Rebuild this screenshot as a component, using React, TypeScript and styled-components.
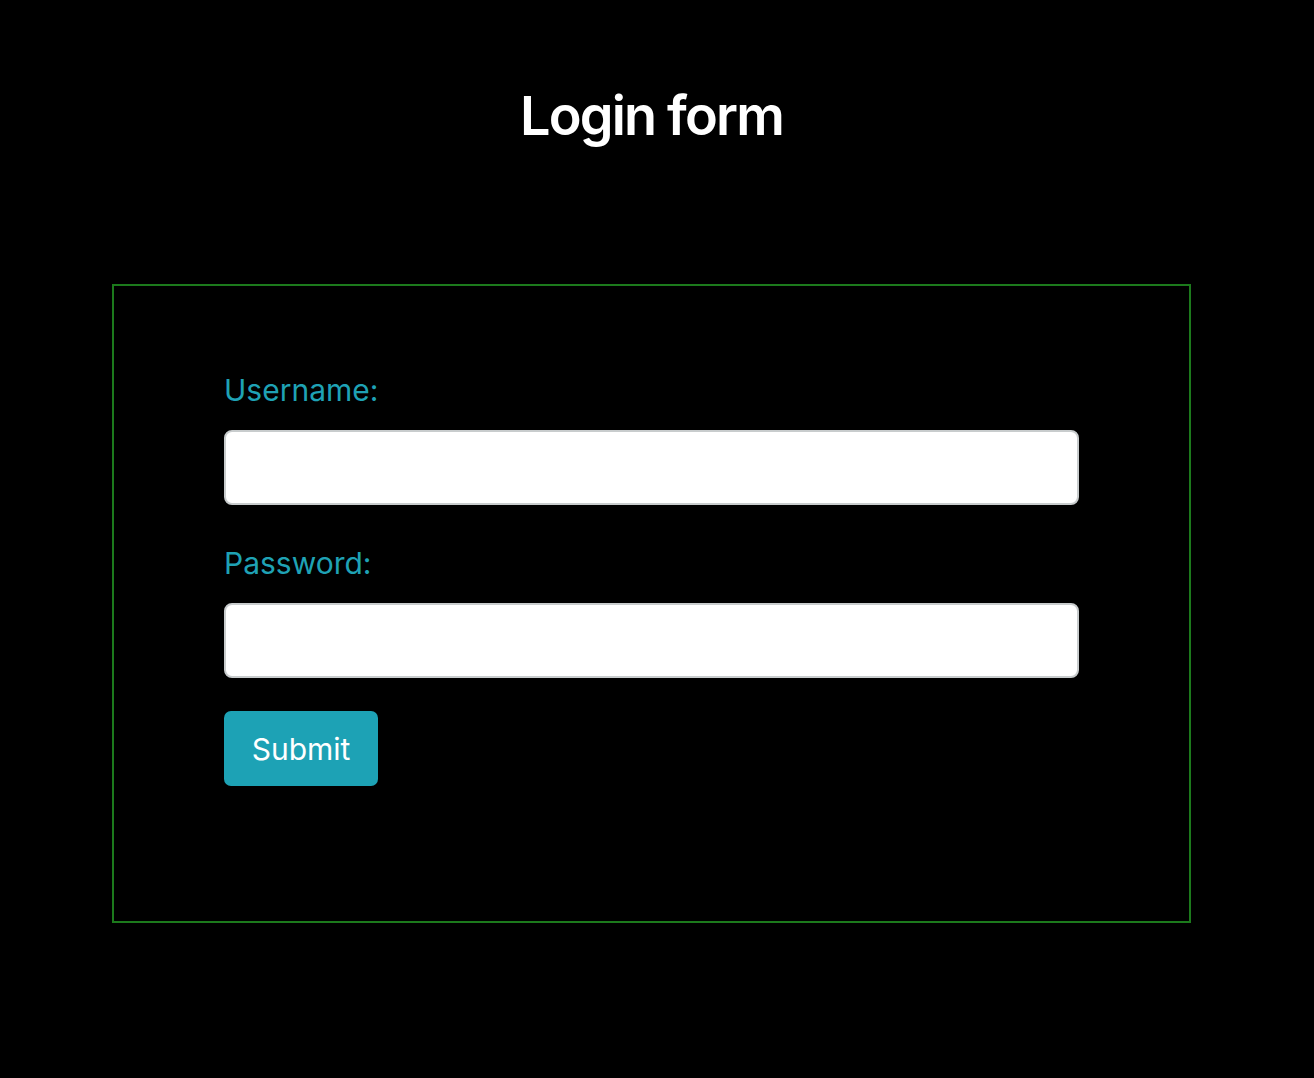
import React from 'react'
import styled, { createGlobalStyle } from 'styled-components'

const GlobalStyle = createGlobalStyle`
  html, body {
    margin: 0;
    padding: 0;
    background: #000;
  }
  body {
    font-family: Inter, "Noto Sans", sans-serif;
    color: #fff;
  }
`

const App = () => {
  return (
    <Page>
      <GlobalStyle />
      <Title>Login form</Title>
      <FormBox onSubmit={e => e.preventDefault()}>
        <Field>
          <Label htmlFor="username">Username:</Label>
          <Input id="username" type="text" />
        </Field>
        <Field>
          <Label htmlFor="password">Password:</Label>
          <Input id="password" type="password" />
        </Field>
        <Button type="submit">Submit</Button>
      </FormBox>
    </Page>
  )
}

export default App

const Page = styled.div`
  width: 1303px;
  min-height: 1078px;
  padding-top: 82px;
  box-sizing: border-box;
  display: flex;
  flex-direction: column;
  align-items: center;
`

const Title = styled.h1`
  margin: 0;
  font-size: 54px;
  font-weight: 600;
  line-height: 68px;
  letter-spacing: -1.8px;
`

const FormBox = styled.form`
  margin-top: 134px;
  width: 1079px;
  height: 639px;
  box-sizing: border-box;
  border: 2px solid #1c7a1c;
  padding: 84px 110px 0;
  display: flex;
  flex-direction: column;
  gap: 38px;
`

const Field = styled.div`
  display: flex;
  flex-direction: column;
`

const Label = styled.label`
  color: #1fa2b5;
  font-size: 30px;
  line-height: 40px;
  margin-bottom: 20px;
`

const Input = styled.input`
  height: 75px;
  box-sizing: border-box;
  border: 2px solid #c8cccd;
  border-radius: 8px;
  background: #fff;
  font-size: 28px;
  padding: 0 16px;
  outline: none;
`

const Button = styled.button`
  align-self: flex-start;
  margin-top: -5px;
  width: 154px;
  height: 75px;
  border: none;
  border-radius: 7px;
  background: #1da2b5;
  color: #fff;
  font-family: Inter, "Noto Sans", sans-serif;
  font-size: 30px;
  cursor: pointer;
`
